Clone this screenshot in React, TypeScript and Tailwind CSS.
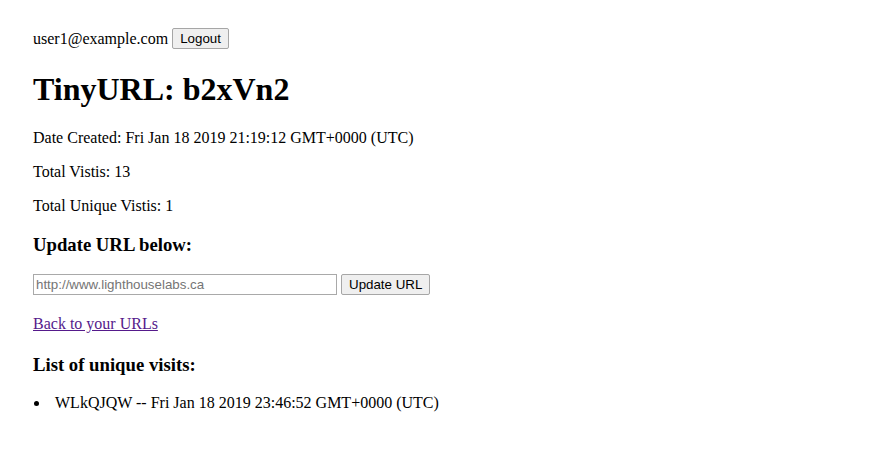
import React from "react";

export default function App() {
  return (
    <div className="min-h-[461px] bg-white px-[33px] pt-[28px] font-['Liberation_Serif',serif] text-[16px] text-black">
      <div className="flex items-center gap-[4px] h-[21px]">
        <span>user1@example.com</span>
        <button className="h-[21px] px-[7px] rounded-[2px] border border-[#a6a6a6] bg-[#efefef] font-['Liberation_Sans',sans-serif] text-[13.33px] leading-none text-black">
          Logout
        </button>
      </div>
      <h1 className="mt-[21px] mb-[21px] text-[32px] font-bold leading-[38px]">TinyURL: b2xVn2</h1>
      <p className="leading-[18px]">Date Created: Fri Jan 18 2019 21:19:12 GMT+0000 (UTC)</p>
      <p className="mt-[16px] leading-[18px]">Total Vistis: 13</p>
      <p className="mt-[16px] leading-[18px]">Total Unique Vistis: 1</p>
      <h3 className="mt-[18.72px] text-[18.72px] font-bold leading-[22px]">Update URL below:</h3>
      <div className="mt-[18px] flex items-center gap-[4px]">
        <input
          placeholder="http://www.lighthouselabs.ca"
          className="w-[304px] h-[21px] border border-[#a9a9a9] px-[2px] font-['Liberation_Sans',sans-serif] text-[13.33px] placeholder:text-[#757575] outline-none"
        />
        <button className="h-[21px] px-[7px] rounded-[2px] border border-[#a6a6a6] bg-[#efefef] font-['Liberation_Sans',sans-serif] text-[13.33px] leading-none text-black">
          Update URL
        </button>
      </div>
      <p className="mt-[20px] leading-[18px]">
        <a href="#" className="text-[#551a8b] underline">Back to your URLs</a>
      </p>
      <h3 className="mt-[21.72px] text-[18.72px] font-bold leading-[22px]">List of unique visits:</h3>
      <ul className="mt-[17.72px]">
        <li className="flex items-center leading-[18px]">
          <span className="w-[22px] flex">
            <span className="ml-[1px] w-[5px] h-[5px] rounded-full bg-black" />
          </span>
          <span>WLkQJQW -- Fri Jan 18 2019 23:46:52 GMT+0000 (UTC)</span>
        </li>
      </ul>
    </div>
  );
}
